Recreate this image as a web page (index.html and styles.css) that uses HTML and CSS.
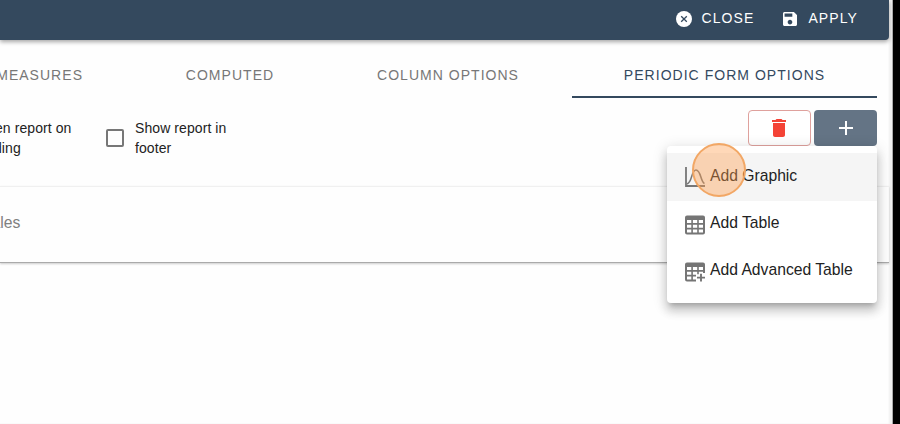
FILE: index.html
```html
<!DOCTYPE html>
<html lang="en">
<head>
    <meta charset="UTF-8">
    <meta name="viewport" content="width=device-width, initial-scale=1.0">
    <title>Periodic Form Options</title>
    <link rel="stylesheet" href="styles.css">
</head>
<body>
    <div class="page">
        <header class="topbar">
            <button class="action close">
                <svg class="icon-close" viewBox="0 0 16 16"><circle cx="8" cy="8" r="8" fill="#fff"/><path d="M5.2 5.2l5.6 5.6M10.8 5.2l-5.6 5.6" stroke="#34495e" stroke-width="1.3"/></svg>
                <span>CLOSE</span>
            </button>
            <button class="action apply">
                <svg class="icon-save" viewBox="3 3 18 18"><path fill="#fff" d="M17 3H5c-1.110 0-2 .9-2 2v14c0 1.100.89 2 2 2h14c1.100 0 2-.9 2-2V7l-4-4zm-5 16c-1.660 0-3-1.340-3-3s1.340-3 3-3 3 1.340 3 3-1.340 3-3 3zm3-10H5V5h10v4z"/></svg>
                <span>APPLY</span>
            </button>
        </header>

        <nav class="tabs">
            <a class="tab tab-measures">MEASURES</a>
            <a class="tab tab-computed">COMPUTED</a>
            <a class="tab tab-columns">COLUMN OPTIONS</a>
            <a class="tab tab-periodic active">PERIODIC FORM OPTIONS</a>
        </nav>

        <section class="toolbar">
            <div class="option option-open">
                <span>en report on</span>
                <span class="second">ding</span>
            </div>
            <label class="option option-footer">
                <i class="checkbox"></i>
                <span>Show report in footer</span>
            </label>
            <div class="buttons">
                <button class="btn btn-delete">
                    <svg viewBox="5 3 14 18"><path fill="#f44336" d="M6 19c0 1.100.9 2 2 2h8c1.100 0 2-.9 2-2V7H6v12zM19 4h-3.500l-1-1h-5l-1 1H5v2h14V4z"/></svg>
                </button>
                <button class="btn btn-add">
                    <svg viewBox="0 0 14 14"><path d="M7 0v14M0 7h14" stroke="#fff" stroke-width="2"/></svg>
                </button>
                <ul class="menu">
                    <li class="hover">
                        <svg viewBox="0 0 20 20" fill="none" stroke="#777"><path stroke-width="1.800" d="M1 0v19h19"/><path stroke-width="1.600" d="M2 17C7.500 15.500 6 3 11 3s4.500 12 8.500 13.500"/></svg>
                        <span>Add Graphic</span>
                    </li>
                    <li>
                        <svg viewBox="0 0 20 19"><path fill="#757575" fill-rule="evenodd" d="M2 0h16a2 2 0 0 1 2 2v15a2 2 0 0 1-2 2H2a2 2 0 0 1-2-2V2a2 2 0 0 1 2-2zM2 4.500v3h4.300v-3zM7.900 4.500v3h4.300v-3zM13.800 4.500v3H18v-3zM2 9.200v3h4.300v-3zM7.900 9.200v3h4.300v-3zM13.800 9.200v3H18v-3zM2 13.900v3h4.300v-3zM7.900 13.900v3h4.300v-3zM13.800 13.900v3H18v-3z"/></svg>
                        <span>Add Table</span>
                    </li>
                    <li>
                        <svg viewBox="0 0 20 19"><path fill="#757575" fill-rule="evenodd" d="M2 0h16a2 2 0 0 1 2 2v8.500h-2V9.200h-4.200v2.500h-1.600V9.200H7.900v3h3.100v1.700H7.900v3H11V19H2a2 2 0 0 1-2-2V2a2 2 0 0 1 2-2zM2 4.500v3h4.300v-3zM7.900 4.500v3h4.300v-3zM13.800 4.500v3H18v-3zM2 9.200v3h4.300v-3zM2 13.900v3h4.300v-3z"/><path stroke="#757575" stroke-width="1.900" d="M16 11.200V19M12 15.100H20"/></svg>
                        <span>Add Advanced Table</span>
                    </li>
                </ul>
                <div class="pointer"></div>
            </div>
        </section>

        <section class="row">
            <span>Sales</span>
        </section>
    </div>
</body>
</html>
```
FILE: styles.css
```css
* {
    box-sizing: border-box;
}

body {
    margin: 0;
    background: #000;
    font-family: "Liberation Sans", Arial, sans-serif;
    overflow: hidden;
}

button {
    margin: 0;
    padding: 0;
    font-family: inherit;
}

svg {
    display: block;
    flex-shrink: 0;
}

.page {
    width: 893px;
    height: 424px;
    padding-right: 3px;
    background: #fefefe;
    border-right: 1px solid #aaa;
    overflow: hidden;
    box-shadow: inset -3px 0 2px #f0f0f0;
}

.topbar {
    display: flex;
    justify-content: flex-end;
    align-items: center;
    height: 40px;
    padding: 0 31px 2px 0;
    background: #34495e;
    border-radius: 0 0 4px 0;
    box-shadow: 0 2px 4px rgba(0, 0, 0, 0.35);
}

.action {
    display: flex;
    align-items: center;
    border: 0;
    background: none;
    color: #fff;
    font-size: 14px;
    letter-spacing: 1.100px;
}

.action span {
    margin-top: -2px;
}

.close {
    gap: 9px;
    margin-right: 29px;
}

.apply {
    gap: 11px;
}

.icon-close {
    width: 16px;
    height: 16px;
}

.icon-save {
    width: 14px;
    height: 14px;
}

.tabs {
    display: flex;
    height: 58px;
    padding-top: 13px;
    margin-bottom: 1px;
}

.tab {
    display: flex;
    flex-shrink: 0;
    justify-content: center;
    align-items: center;
    padding-bottom: 1px;
    color: #777;
    font-size: 14px;
    letter-spacing: 1.030px;
    white-space: nowrap;
}

.tab-measures {
    width: 136px;
    padding-right: 53px;
    justify-content: flex-end;
}

.tab-computed {
    width: 188px;
}

.tab-columns {
    width: 248px;
    padding-bottom: 2px;
}

.tab-periodic {
    width: 305px;
}

.tab.active {
    color: #34495e;
    border-bottom: 2px solid #34495e;
    padding-bottom: 0;
}

.toolbar {
    display: flex;
    height: 87px;
    padding: 11px 12px 0 0;
}

.option {
    font-size: 14px;
    line-height: 19.500px;
    color: #222;
    letter-spacing: 0.080px;
    padding-top: 9px;
}

.option-open {
    width: 106px;
}

.option-open span {
    display: block;
    margin-left: -5px;
}

.option-open .second {
    margin-left: -6px;
}

.option-footer {
    display: flex;
    gap: 11px;
    width: 140px;
}

.checkbox {
    flex-shrink: 0;
    width: 18px;
    height: 18px;
    margin-top: 10px;
    border: 2px solid #777;
    border-radius: 2px;
}

.buttons {
    position: relative;
    display: flex;
    gap: 3px;
    margin-left: auto;
}

.btn {
    display: flex;
    justify-content: center;
    align-items: center;
    width: 63px;
    height: 36px;
    border-radius: 4px;
}

.btn-delete {
    padding-right: 1px;
    border: 1px solid #dfa19d;
    background: #fff;
}

.btn-delete svg {
    width: 14px;
    height: 18px;
}

.btn-add {
    border: 0;
    background: #647485;
}

.btn-add svg {
    width: 14px;
    height: 14px;
}

.menu {
    position: absolute;
    top: 36px;
    right: 0;
    width: 210px;
    height: 157px;
    margin: 0;
    padding: 7px 0 8px;
    list-style: none;
    background: #fff;
    border-radius: 4px;
    box-shadow: 0 5px 5px -3px rgba(0, 0, 0, 0.2), 0 8px 10px 1px rgba(0, 0, 0, 0.14), 0 3px 14px 2px rgba(0, 0, 0, 0.12);
}

.menu li {
    display: flex;
    align-items: center;
    gap: 5px;
    height: 47px;
    padding-left: 18px;
    color: #222;
    font-size: 15.700px;
}

.menu li span {
    margin-top: -3px;
}

.menu svg {
    width: 20px;
    height: 20px;
    margin-top: 0;
}

.menu .hover {
    height: 48px;
    background: #f5f5f5;
}

/* click highlight */
.pointer {
    position: absolute;
    top: 33px;
    left: -56px;
    width: 54px;
    height: 54px;
    border: 2px solid #f2a765;
    border-radius: 50%;
    background: rgba(255, 158, 77, 0.4);
}

.row {
    display: flex;
    align-items: center;
    height: 77px;
    border-top: 1px solid #f0f0f0;
    border-bottom: 1px solid #aaa;
    box-shadow: 0 1px 2px rgba(0, 0, 0, 0.2);
    color: #808080;
    font-size: 15.700px;
}

.row span {
    margin-left: -19px;
    margin-top: -3px;
}
```
